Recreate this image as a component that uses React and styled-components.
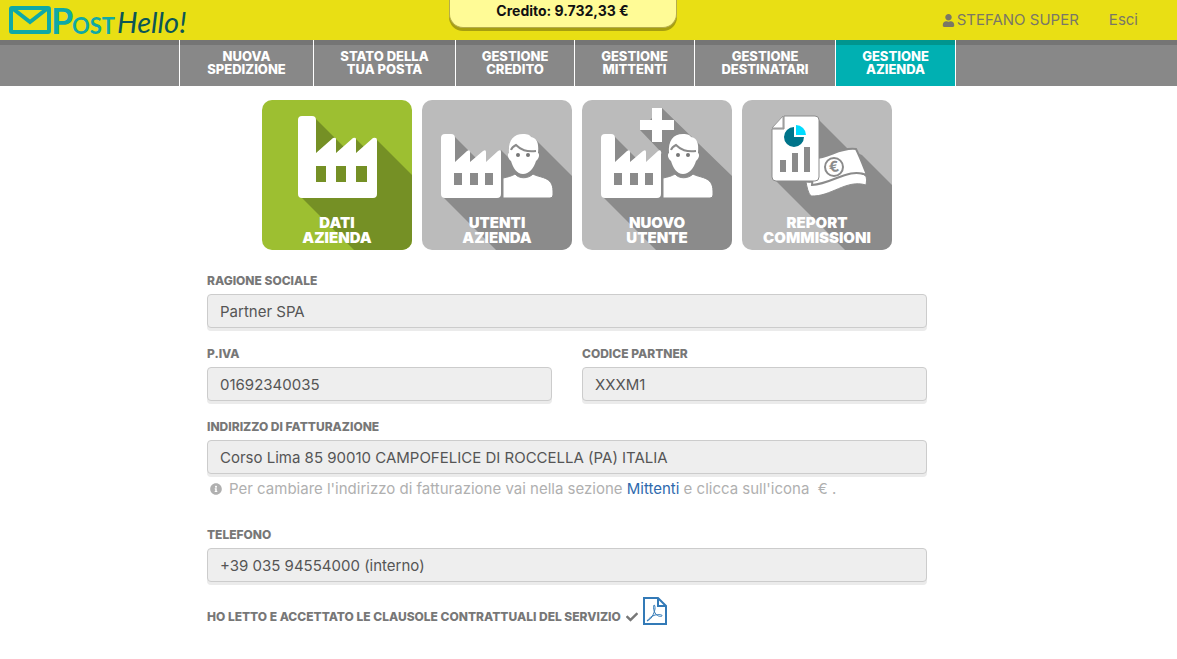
import React from "react";
import styled, { createGlobalStyle, css } from "styled-components";
import { FaUser, FaInfoCircle, FaCheck } from "react-icons/fa";

const GlobalStyle = createGlobalStyle`
  *,
  *::before,
  *::after {
    box-sizing: border-box;
  }
  body {
    margin: 0;
    background: #fff;
    color: #777;
    font-family: Inter, "Open Sans", sans-serif;
    font-size: 15px;
    line-height: 20px;
  }
  a {
    text-decoration: none;
  }
`;

const Header = styled.header`
  display: grid;
  grid-template-columns: 1fr auto 1fr;
  align-items: start;
  height: 40px;
  background: #e9df14;
`;
const LogoLink = styled.a`
  display: block;
  width: 190px;
  height: 40px;
  svg {
    overflow: visible;
  }
`;
const Credit = styled.div`
  width: 228px;
  height: 28px;
  margin-right: 52px;
  padding-top: 1px;
  border: 1px solid #b5ad4a;
  border-top: 0;
  border-radius: 0 0 14px 14px;
  background: #fffb96;
  box-shadow: 0 3px 0 #a79f10;
  color: #111;
  font-size: 14px;
  font-weight: 700;
  text-align: center;
`;
const UserMenu = styled.div`
  display: flex;
  justify-content: flex-end;
  gap: 30px;
  padding: 10px 39px 0 0;
`;
const UserLink = styled.a`
  display: flex;
  align-items: center;
  gap: 2px;
  color: #7a7766;
  white-space: nowrap;
`;

const Nav = styled.nav`
  display: flex;
  justify-content: center;
  height: 46px;
  padding-right: 42px;
  background: #888;
  box-shadow: inset 0 5px 0 #757575;
`;
const NavItem = styled.a`
  width: ${(props) => props.$width}px;
  padding-top: 10px;
  border-left: 1px solid #fff;
  color: #fff;
  font-size: 13px;
  font-weight: 800;
  line-height: 13px;
  text-align: center;
  text-transform: uppercase;
  &:last-child {
    border-right: 1px solid #fff;
  }
  ${(props) =>
    props.$active &&
    css`
      background: #00b0b2;
      box-shadow: inset 0 5px 0 #00958f;
    `}
`;

const Main = styled.main`
  padding: 14px 43px 30px 0;
`;
const Content = styled.div`
  max-width: 720px;
  margin: 0 auto;
`;
const Tiles = styled.div`
  display: flex;
  justify-content: center;
  gap: 10px;
  padding-left: 20px;
  margin-bottom: 21px;
`;
const Tile = styled.a`
  display: grid;
  width: 150px;
  height: 150px;
  overflow: hidden;
  border-radius: 10px;
  background: ${(props) => (props.$active ? "#9dbf31" : "#bbb")};
  color: #fff;
  > * {
    grid-area: 1 / 1;
  }
`;
const TileLabel = styled.span`
  align-self: end;
  padding-bottom: 5px;
  font-size: 15px;
  font-weight: 900;
  line-height: 15px;
  text-align: center;
  text-transform: uppercase;
`;

const FormRow = styled.div`
  display: flex;
  gap: 30px;
`;
const Group = styled.div`
  flex: 1;
  margin-bottom: ${(props) => (props.$last ? 15 : 16)}px;
`;
const Label = styled.label`
  display: block;
  height: 23px;
  color: #777;
  font-size: 12px;
  font-weight: 800;
  text-transform: uppercase;
`;
const TextField = styled.input`
  display: block;
  width: 100%;
  height: 34px;
  padding: 6px 12px;
  border: 1px solid #ccc;
  border-radius: 4px;
  background: #eee;
  box-shadow: 0 3px 0 #ebebeb;
  color: #555;
  font: inherit;
  outline: 0;
`;
const Help = styled.p`
  display: flex;
  align-items: center;
  margin: 5px 0 0 3px;
  padding-bottom: 10px;
  color: #b0b0b0;
  svg {
    margin-right: 7px;
  }
  a {
    color: #2e69ad;
  }
`;
const Terms = styled.div`
  display: flex;
  align-items: flex-end;
  gap: 5px;
  color: #777;
  font-size: 12px;
  font-weight: 800;
  line-height: 16px;
  text-transform: uppercase;
  > svg {
    margin-bottom: 2px;
  }
`;
const PdfLink = styled.a`
  display: block;
  height: 28px;
  color: #337ab7;
`;

function Logo() {
  return (
    <svg width="190" height="40" viewBox="0 0 190 40" role="img" aria-label="Post Hello!">
      <g fill="none" stroke="#0fa9a6" strokeWidth="4">
        <rect x="11" y="8" width="38" height="24" rx="1" />
        <path d="M12 8l18 14 18-14" />
      </g>
      <g fill="#0fa9a6" fontFamily="Lato, sans-serif" fontWeight="700">
        <text x="51" y="34" fontSize="36">P</text>
        <text x="72" y="34" fontSize="22">OST</text>
      </g>
      <text
        x="117"
        y="33"
        fill="#0b5657"
        fontFamily="Lato, sans-serif"
        fontSize="29"
        fontStyle="italic"
        fontWeight="400"
      >
        Hello!
      </text>
    </svg>
  );
}

function SmallFactory() {
  return (
    <>
      <path
        fill="#fff"
        d="M19 38q0-4 4-4h6q4 0 4 4v24l12-11q3-2 3 1v10l13-11q3-2 3 1v10l12-11q3-2 3 1v42q0 4-4 4H23q-4 0-4-4z"
      />
      <path fill="#8b8b8b" d="M32 73h8v12h-8zM48 73h8v12h-8zM63 73h8v12h-8z" />
    </>
  );
}

function Person() {
  return (
    <>
      <path
        fill="#fff"
        stroke="#8b8b8b"
        strokeWidth="1"
        d="M81 98V78c5-1 9-2 12-4 4 5 13 5 18 0 6 4 20 2 20 17v4q0 3-3 3z"
      />
      <path
        fill="#fff"
        d="M87 53c-1-12 4-19 14-19 5 0 7 1 8 3 6 1 8 6 7 16 2 1 1 6-2 8-2 7-7 13-13 13s-10-6-12-13c-3-2-4-7-2-8z"
      />
      <path fill="none" stroke="#8b8b8b" strokeWidth="2" d="M89 50c1-3 3-4 5-5 5 5 10 7 20 6" />
      <circle cx="96" cy="55" r="2" fill="#777" />
      <circle cx="106" cy="55" r="2" fill="#777" />
    </>
  );
}

function CompanyIcon() {
  return (
    <svg width="150" height="150" aria-hidden="true">
      <path fill="#759025" d="M52 17l28 28-26 10zM73 38l13 13-12 4zM93 38l13 13-12 4zM114 39l36 36v75H92L38 96z" />
      <path
        fill="#fff"
        d="M36 20q0-4 4-4h10q4 0 4 4v33l17-15q3-1 3 1v14l17-15q3-1 3 1v14l17-15q4-1 4 2v54q0 4-4 4H40q-4 0-4-4z"
      />
      <path fill="#759025" d="M54 66h10v16H54zM74 66h10v16H74zM94 66h11v16H94z" />
    </svg>
  );
}

function UsersIcon() {
  return (
    <svg width="150" height="150" aria-hidden="true">
      <path fill="#8b8b8b" d="M31 35l54 54-52-20zM79 50l10 10 25-20 36 36v74H74L20 96l59-43z" />
      <SmallFactory />
      <Person />
    </svg>
  );
}

function NewUserIcon() {
  return (
    <svg width="150" height="150" aria-hidden="true">
      <path fill="#8b8b8b" d="M31 35l54 54-52-20zM80 8l70 68v74H74L20 96l60-43-22-23z" />
      <SmallFactory />
      <path fill="#fff" d="M70 8h10v12h12v10H80v12H70V30H58V20h12z" />
      <Person />
    </svg>
  );
}

function ReportIcon() {
  return (
    <svg width="150" height="150" aria-hidden="true">
      <path fill="#8b8b8b" d="M75 18l31 31 14 6 30 30v65h-47L33 80z" />
      <path
        fill="#fff"
        stroke="#8b8b8b"
        strokeWidth="1"
        d="M64 82c12 2 22-5 32-9 8-3 15-2 24 1 5 1 5 5 4 11-20-6-35 12-55 11-3-3-4-9-5-14z"
      />
      <path
        fill="#fff"
        stroke="#8b8b8b"
        strokeWidth="2"
        d="M73 58c14 0 25-11 41-9 4 8 7 16 11 26-19-8-34 9-55 10z"
      />
      <circle cx="92" cy="67" r="9" fill="none" stroke="#8b8b8b" strokeWidth="2" />
      <text
        x="92"
        y="72"
        fill="#8b8b8b"
        fontSize="15"
        fontWeight="700"
        textAnchor="middle"
        transform="rotate(-10 92 67)"
      >
        €
      </text>
      <path fill="#fff" stroke="#8b8b8b" strokeWidth="1" d="M42 16h31q4 0 4 4v57q0 4-4 4H34q-4 0-4-4V29h12z" />
      <path fill="#fff" stroke="#999" strokeWidth="1" d="M30 28l11-12v12z" />
      <path fill="#00748a" d="M52 27v10h10a10 10 0 1 1-10-10z" />
      <path fill="#00dcff" d="M54 25a10 10 0 0 1 10 10H54z" />
      <path fill="#8b8b8b" d="M38 60h6v12h-6zM50 53h6v19h-6zM62 47h6v25h-6z" />
    </svg>
  );
}

function PdfIcon() {
  return (
    <svg width="24" height="28" viewBox="0 0 24 28" fill="none" stroke="currentColor" aria-hidden="true">
      <path strokeWidth="2" d="M1 1h14l8 8v18H1z" />
      <path strokeWidth="2" d="M15 1v8h8" />
      <path
        strokeWidth="1"
        d="M11 8c-1 3 0 6 1 8 2 3 5 4 7 3 1-1-3-2-7-1-3 1-6 3-8 6 4-1 7-7 8-12 0-2 0-4-1-4z"
      />
    </svg>
  );
}

const navItems = [
  { lines: ["Nuova", "spedizione"], width: 134 },
  { lines: ["Stato della", "tua posta"], width: 142 },
  { lines: ["Gestione", "credito"], width: 119 },
  { lines: ["Gestione", "mittenti"], width: 120 },
  { lines: ["Gestione", "destinatari"], width: 141 },
  { lines: ["Gestione", "azienda"], width: 121, active: true },
];

const tiles = [
  { lines: ["Dati", "azienda"], Icon: CompanyIcon, active: true },
  { lines: ["Utenti", "azienda"], Icon: UsersIcon },
  { lines: ["Nuovo", "utente"], Icon: NewUserIcon },
  { lines: ["Report", "commissioni"], Icon: ReportIcon },
];

function Field({ id, label, value, last, children }) {
  return (
    <Group $last={last}>
      <Label htmlFor={id}>{label}</Label>
      <TextField id={id} type="text" defaultValue={value} readOnly />
      {children}
    </Group>
  );
}

function App() {
  return (
    <>
      <GlobalStyle />
      <Header>
        <LogoLink href="#">
          <Logo />
        </LogoLink>
        <Credit>Credito: 9.732,33 €</Credit>
        <UserMenu>
          <UserLink href="#">
            <FaUser size={13} />
            STEFANO SUPER
          </UserLink>
          <UserLink href="#">Esci</UserLink>
        </UserMenu>
      </Header>
      <Nav>
        {navItems.map(({ lines, width, active }) => (
          <NavItem key={lines.join(" ")} href="#" $width={width} $active={active}>
            {lines[0]}
            <br />
            {lines[1]}
          </NavItem>
        ))}
      </Nav>
      <Main>
        <Content>
          <Tiles>
            {tiles.map(({ lines, Icon, active }) => (
              <Tile key={lines.join(" ")} href="#" $active={active}>
                <Icon />
                <TileLabel>
                  {lines[0]}
                  <br />
                  {lines[1]}
                </TileLabel>
              </Tile>
            ))}
          </Tiles>
          <form>
            <Field id="ragione" label="Ragione sociale" value="Partner SPA" />
            <FormRow>
              <Field id="piva" label="P.IVA" value="01692340035" />
              <Field id="codice" label="Codice partner" value="XXXM1" />
            </FormRow>
            <Field
              id="indirizzo"
              label="Indirizzo di fatturazione"
              value="Corso Lima 85 90010 CAMPOFELICE DI ROCCELLA (PA) ITALIA"
            >
              <Help>
                <FaInfoCircle size={12} />
                <span>
                  Per cambiare l'indirizzo di fatturazione vai nella sezione <a href="#">Mittenti</a> e clicca
                  sull'icona &nbsp;€ .
                </span>
              </Help>
            </Field>
            <Field id="telefono" label="Telefono" value="+39 035 94554000 (interno)" last />
            <Terms>
              <span>Ho letto e accettato le clausole contrattuali del servizio</span>
              <FaCheck size={12} />
              <PdfLink href="#" aria-label="Clausole contrattuali PDF">
                <PdfIcon />
              </PdfLink>
            </Terms>
          </form>
        </Content>
      </Main>
    </>
  );
}

export default App;
